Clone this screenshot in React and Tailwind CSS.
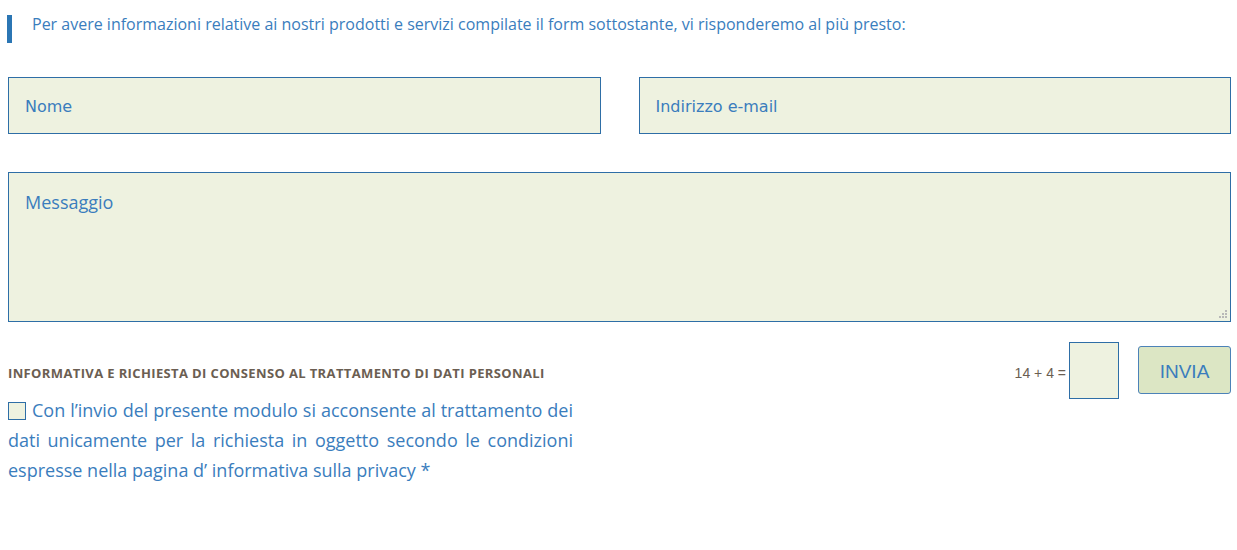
export default function App() {
  const blue = "text-[#3a7dbd]";
  return (
    <div className="w-[1237px] h-[550px] bg-white pl-2 pr-[6px] pt-[13px] font-['Open_Sans',sans-serif]">
      <div className="flex items-start h-[30px]">
        <div className="w-[5px] h-[28px] mt-[2px] bg-[#2b76b4] -ml-[1px]"></div>
        <p className={`ml-[20px] text-[16px] leading-[22px] ${blue}`}>
          Per avere informazioni relative ai nostri prodotti e servizi compilate il form sottostante, vi risponderemo al più presto:
        </p>
      </div>
      <div className="flex gap-[38px] mt-[34px]">
        <div className="flex-1 h-[57px] border border-[#2e6ea6] bg-[#eef2e0] flex items-center pl-[16px] pt-[3px]">
          <span className={`font-['DejaVu_Sans',sans-serif] text-[16px] ${blue}`}>Nome</span>
        </div>
        <div className="flex-1 h-[57px] border border-[#2e6ea6] bg-[#eef2e0] flex items-center pl-[16px] pt-[3px]">
          <span className={`font-['DejaVu_Sans',sans-serif] text-[16px] ${blue}`}>Indirizzo e-mail</span>
        </div>
      </div>
      <div className="relative mt-[38px] h-[150px] border border-[#2e6ea6] bg-[#eef2e0] pl-[16px] pt-[16px]">
        <span className={`text-[18px] ${blue}`}>Messaggio</span>
        <svg className="absolute right-[3px] bottom-[3px]" width="8" height="8" viewBox="0 0 8 8">
          <rect x="6" y="0" width="2" height="2" fill="#b8b8b8" />
          <rect x="3" y="3" width="2" height="2" fill="#b8b8b8" />
          <rect x="6" y="3" width="2" height="2" fill="#b8b8b8" />
          <rect x="0" y="6" width="2" height="2" fill="#b8b8b8" />
          <rect x="3" y="6" width="2" height="2" fill="#b8b8b8" />
          <rect x="6" y="6" width="2" height="2" fill="#b8b8b8" />
        </svg>
      </div>
      <div className="flex justify-between mt-[20px]">
        <div className="w-[565px] pt-[22px]">
          <div className="text-[13px] font-bold tracking-[0.37px] text-[#6b5e52] leading-[18px] whitespace-nowrap">
            INFORMATIVA E RICHIESTA DI CONSENSO AL TRATTAMENTO DI DATI PERSONALI
          </div>
          <div className={`mt-[13px] text-[18px] leading-[30px] text-justify ${blue}`}>
            <span className="inline-block align-[-3px] w-[18px] h-[18px] border border-[#2e6ea6] bg-[#eef2e0] mr-[6px]"></span>
            Con l’invio del presente modulo si acconsente al trattamento dei dati unicamente per la richiesta in oggetto secondo le condizioni espresse nella pagina d’ informativa sulla privacy *
          </div>
        </div>
        <div className="flex items-start">
          <div className="flex items-center h-[57px]">
            <span className="font-['Liberation_Sans',sans-serif] text-[14px] text-[#6b5e52] mr-[3px] mt-[6px]">14 + 4 =</span>
            <div className="w-[50px] h-[57px] border border-[#2e6ea6] bg-[#eef2e0]"></div>
          </div>
          <button className="ml-[19px] mt-[4px] w-[93px] h-[48px] pt-[4px] rounded-[3px] border border-[#4c82b8] bg-[#dce6c4] font-['Liberation_Sans',sans-serif] text-[19px] text-[#3a7dbd]">
            INVIA
          </button>
        </div>
      </div>
    </div>
  );
}
